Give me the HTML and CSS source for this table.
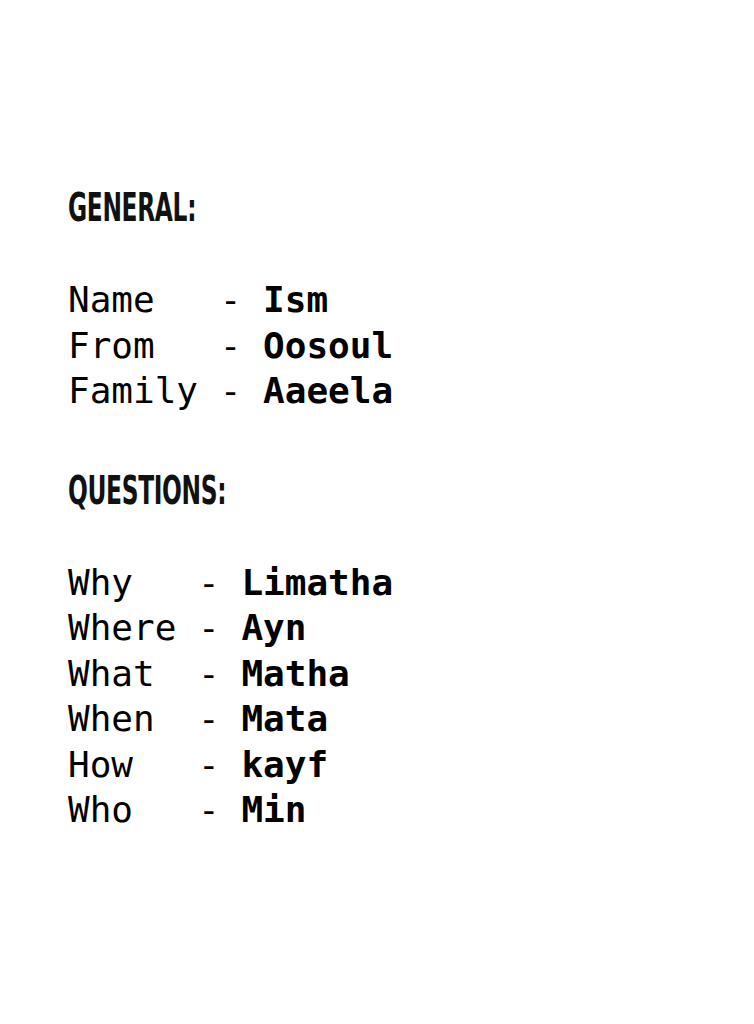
FILE: index.html
```html
<!DOCTYPE html>
<html>
<head>
<meta charset="utf-8">
<link rel="stylesheet" href="styles.css">
</head>
<body>
<main class="page">
  <h2 class="heading">GENERAL:</h2>
  <pre class="list">Name   - <b>Ism</b>
From   - <b>Oosoul</b>
Family - <b>Aaeela</b></pre>
  <h2 class="heading">QUESTIONS:</h2>
  <pre class="list">Why   - <b>Limatha</b>
Where - <b>Ayn</b>
What  - <b>Matha</b>
When  - <b>Mata</b>
How   - <b>kayf</b>
Who   - <b>Min</b></pre>
</main>
</body>
</html>
```
FILE: styles.css
```css
html, body {
  margin: 0;
  padding: 0;
  background: #fff;
  color: #000;
}
.page {
  padding: 180px 0 0 68px;
}
.heading {
  margin: 0;
  font-family: "DejaVu Sans Condensed", "Liberation Sans Narrow", "Liberation Sans", sans-serif;
  font-stretch: condensed;
  font-weight: 700;
  font-size: 39px;
  line-height: 56px;
  letter-spacing: -0.5px;
  transform: scaleX(0.665);
  transform-origin: left center;
  color: #111;
}
.list {
  margin: 41px 0 49px;
  font-family: "DejaVu Sans Mono", "Liberation Mono", monospace;
  font-size: 36px;
  line-height: 45.5px;
}
.list b {
  font-weight: 700;
}
```
